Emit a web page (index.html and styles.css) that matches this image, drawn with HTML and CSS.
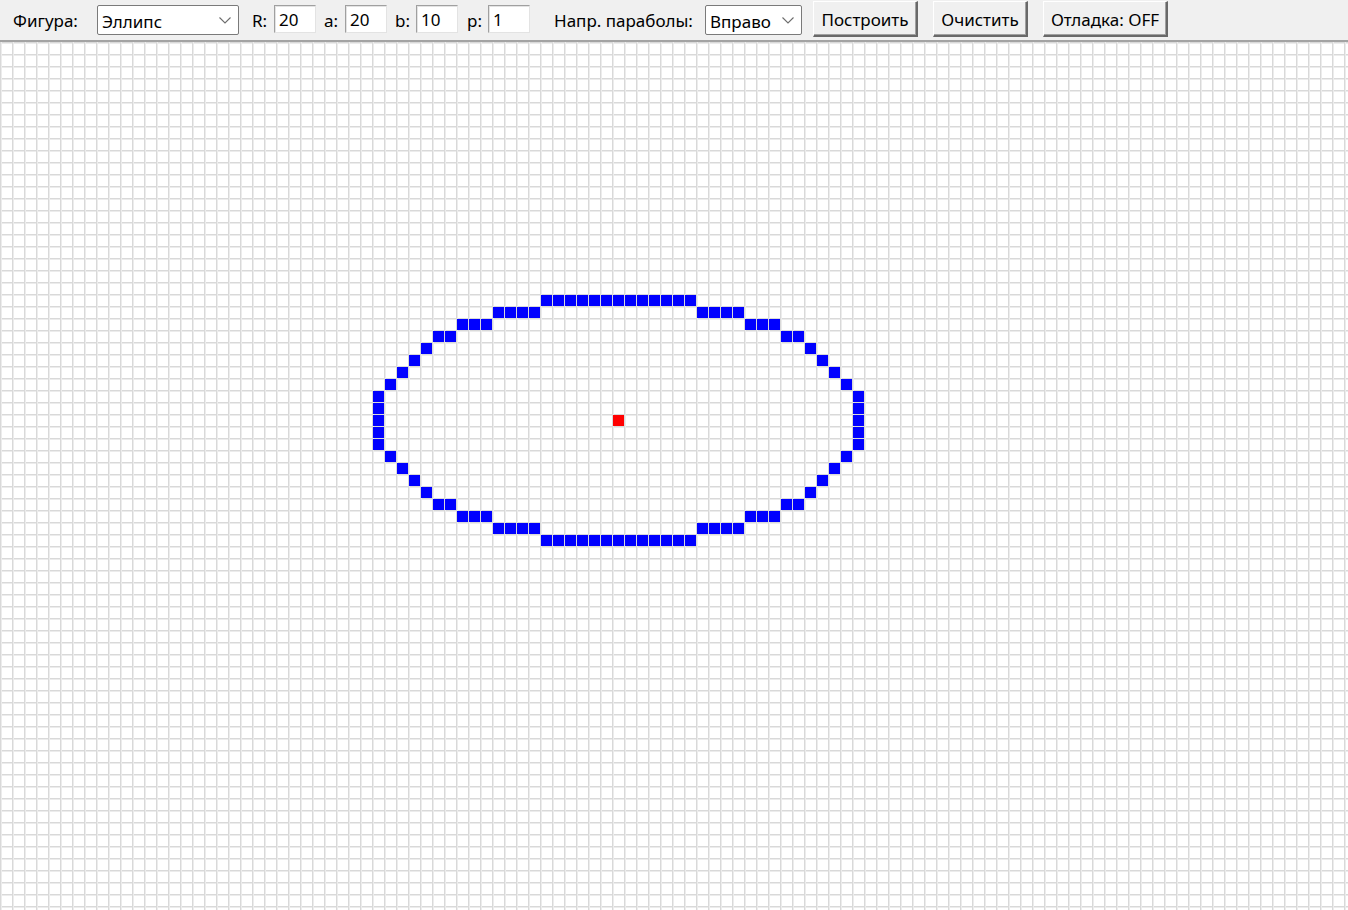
FILE: index.html
```html
<!DOCTYPE html>
<html lang="ru">
<head>
<meta charset="utf-8">
<title>Растровая графика</title>
<link rel="stylesheet" href="styles.css">
</head>
<body>
<div class="toolbar">
  <span class="lbl lbl-fig">Фигура:</span>
  <div class="combo combo-fig"><span>Эллипс</span><svg class="chev" width="12" height="7" viewBox="0 0 12 7"><polyline points="0.5,0.5 6,6 11.5,0.5" fill="none" stroke="#6d6d6d" stroke-width="1.1"/></svg></div>
  <span class="lbl lbl-r">R:</span>
  <div class="entry">20</div>
  <span class="lbl lbl-a">a:</span>
  <div class="entry">20</div>
  <span class="lbl lbl-b">b:</span>
  <div class="entry">10</div>
  <span class="lbl lbl-p">p:</span>
  <div class="entry">1</div>
  <span class="lbl lbl-dir">Напр. параболы:</span>
  <div class="combo combo-dir"><span>Вправо</span><svg class="chev" width="12" height="7" viewBox="0 0 12 7"><polyline points="0.5,0.5 6,6 11.5,0.5" fill="none" stroke="#6d6d6d" stroke-width="1.1"/></svg></div>
  <div class="btn btn-build">Построить</div>
  <div class="btn btn-clear">Очистить</div>
  <div class="btn btn-debug">Отладка: OFF</div>
</div>
<div class="canvas">
  <div class="px" style="grid-area:22/46"></div><div class="px" style="grid-area:22/47"></div><div class="px" style="grid-area:22/48"></div><div class="px" style="grid-area:22/49"></div><div class="px" style="grid-area:22/50"></div><div class="px" style="grid-area:22/51"></div><div class="px" style="grid-area:22/52"></div><div class="px" style="grid-area:22/53"></div><div class="px" style="grid-area:22/54"></div><div class="px" style="grid-area:22/55"></div><div class="px" style="grid-area:22/56"></div><div class="px" style="grid-area:22/57"></div><div class="px" style="grid-area:22/58"></div>
  <div class="px" style="grid-area:23/42"></div><div class="px" style="grid-area:23/43"></div><div class="px" style="grid-area:23/44"></div><div class="px" style="grid-area:23/45"></div><div class="px" style="grid-area:23/59"></div><div class="px" style="grid-area:23/60"></div><div class="px" style="grid-area:23/61"></div><div class="px" style="grid-area:23/62"></div>
  <div class="px" style="grid-area:24/39"></div><div class="px" style="grid-area:24/40"></div><div class="px" style="grid-area:24/41"></div><div class="px" style="grid-area:24/63"></div><div class="px" style="grid-area:24/64"></div><div class="px" style="grid-area:24/65"></div>
  <div class="px" style="grid-area:25/37"></div><div class="px" style="grid-area:25/38"></div><div class="px" style="grid-area:25/66"></div><div class="px" style="grid-area:25/67"></div>
  <div class="px" style="grid-area:26/36"></div><div class="px" style="grid-area:26/68"></div>
  <div class="px" style="grid-area:27/35"></div><div class="px" style="grid-area:27/69"></div>
  <div class="px" style="grid-area:28/34"></div><div class="px" style="grid-area:28/70"></div>
  <div class="px" style="grid-area:29/33"></div><div class="px" style="grid-area:29/71"></div>
  <div class="px" style="grid-area:30/32"></div><div class="px" style="grid-area:30/72"></div>
  <div class="px" style="grid-area:31/32"></div><div class="px" style="grid-area:31/72"></div>
  <div class="px" style="grid-area:32/32"></div><div class="px" style="grid-area:32/72"></div>
  <div class="px" style="grid-area:33/32"></div><div class="px" style="grid-area:33/72"></div>
  <div class="px" style="grid-area:34/32"></div><div class="px" style="grid-area:34/72"></div>
  <div class="px" style="grid-area:35/33"></div><div class="px" style="grid-area:35/71"></div>
  <div class="px" style="grid-area:36/34"></div><div class="px" style="grid-area:36/70"></div>
  <div class="px" style="grid-area:37/35"></div><div class="px" style="grid-area:37/69"></div>
  <div class="px" style="grid-area:38/36"></div><div class="px" style="grid-area:38/68"></div>
  <div class="px" style="grid-area:39/37"></div><div class="px" style="grid-area:39/38"></div><div class="px" style="grid-area:39/66"></div><div class="px" style="grid-area:39/67"></div>
  <div class="px" style="grid-area:40/39"></div><div class="px" style="grid-area:40/40"></div><div class="px" style="grid-area:40/41"></div><div class="px" style="grid-area:40/63"></div><div class="px" style="grid-area:40/64"></div><div class="px" style="grid-area:40/65"></div>
  <div class="px" style="grid-area:41/42"></div><div class="px" style="grid-area:41/43"></div><div class="px" style="grid-area:41/44"></div><div class="px" style="grid-area:41/45"></div><div class="px" style="grid-area:41/59"></div><div class="px" style="grid-area:41/60"></div><div class="px" style="grid-area:41/61"></div><div class="px" style="grid-area:41/62"></div>
  <div class="px" style="grid-area:42/46"></div><div class="px" style="grid-area:42/47"></div><div class="px" style="grid-area:42/48"></div><div class="px" style="grid-area:42/49"></div><div class="px" style="grid-area:42/50"></div><div class="px" style="grid-area:42/51"></div><div class="px" style="grid-area:42/52"></div><div class="px" style="grid-area:42/53"></div><div class="px" style="grid-area:42/54"></div><div class="px" style="grid-area:42/55"></div><div class="px" style="grid-area:42/56"></div><div class="px" style="grid-area:42/57"></div><div class="px" style="grid-area:42/58"></div>
  <div class="px px-center" style="grid-area:32/52"></div>
</div>
</body>
</html>
```
FILE: styles.css
```css
html, body {
  margin: 0;
  padding: 0;
  height: 100%;
  overflow: hidden;
  background: #ffffff;
}
body {
  font-family: "Noto Sans", "Open Sans", sans-serif;
  font-size: 17px;
  color: #000000;
}
.toolbar {
  height: 40px;
  background: #f0f0f0;
  border-bottom: 2px solid #a3a3a3;
  box-sizing: content-box;
  display: flex;
  align-items: center;
  padding-left: 13px;
  white-space: nowrap;
}
.lbl {
  display: block;
  line-height: 20px;
  padding-top: 2px;
  flex: none;
}
.lbl-fig { width: 84px; }
.lbl-r { width: 22px; margin-left: 13px; }
.lbl-a { width: 21px; margin-left: 8px; }
.lbl-b { width: 21px; margin-left: 8px; }
.lbl-p { width: 21px; margin-left: 9px; }
.lbl-dir { width: 151px; margin-left: 24px; }
.combo {
  flex: none;
  height: 30px;
  box-sizing: border-box;
  background: #ffffff;
  border: 1px solid #7a7a7a;
  border-radius: 2px;
  display: flex;
  align-items: center;
  justify-content: space-between;
  padding: 2px 7px 0 4px;
}
.combo-fig { width: 142px; }
.combo-dir { width: 97px; }
.chev { display: block; margin-top: -2px; }
.entry {
  flex: none;
  width: 42px;
  height: 28px;
  box-sizing: border-box;
  background: #ffffff;
  border-style: solid;
  border-width: 1px;
  border-color: #a0a0a0 #e3e3e3 #e3e3e3 #a0a0a0;
  box-shadow: inset 1px 1px 0 #e3e3e3;
  padding-left: 4px;
  line-height: 27px;
  margin-top: -2px;
}
.btn {
  flex: none;
  height: 36px;
  box-sizing: border-box;
  background: #f0f0f0;
  border-style: solid;
  border-width: 1px 2px 2px 1px;
  border-color: #ffffff #696969 #696969 #ffffff;
  box-shadow: inset -1px -1px 0 #a0a0a0;
  display: flex;
  align-items: center;
  justify-content: center;
  padding-top: 1px;
  margin-top: -2px;
}
.btn-build { width: 105px; margin-left: 11px; }
.btn-clear { width: 95px; margin-left: 15px; }
.btn-debug { width: 125px; margin-left: 15px; }
.canvas {
  height: calc(100% - 42px);
  overflow: hidden;
  display: grid;
  grid-template-columns: repeat(113, 12px);
  grid-template-rows: repeat(73, 12px);
  background-color: #ffffff;
  background-image:
    linear-gradient(to right, #d9d9d9 0, #d9d9d9 1px, #ececec 1px, #ececec 2px, transparent 2px),
    linear-gradient(to bottom, #d9d9d9 0, #d9d9d9 1px, #ececec 1px, #ececec 2px, transparent 2px);
  background-size: 12px 12px;
}
.px {
  margin: 1px 0 0 1px;
  background: #0000ff;
}
.px-center {
  background: #ff0000;
}
```
